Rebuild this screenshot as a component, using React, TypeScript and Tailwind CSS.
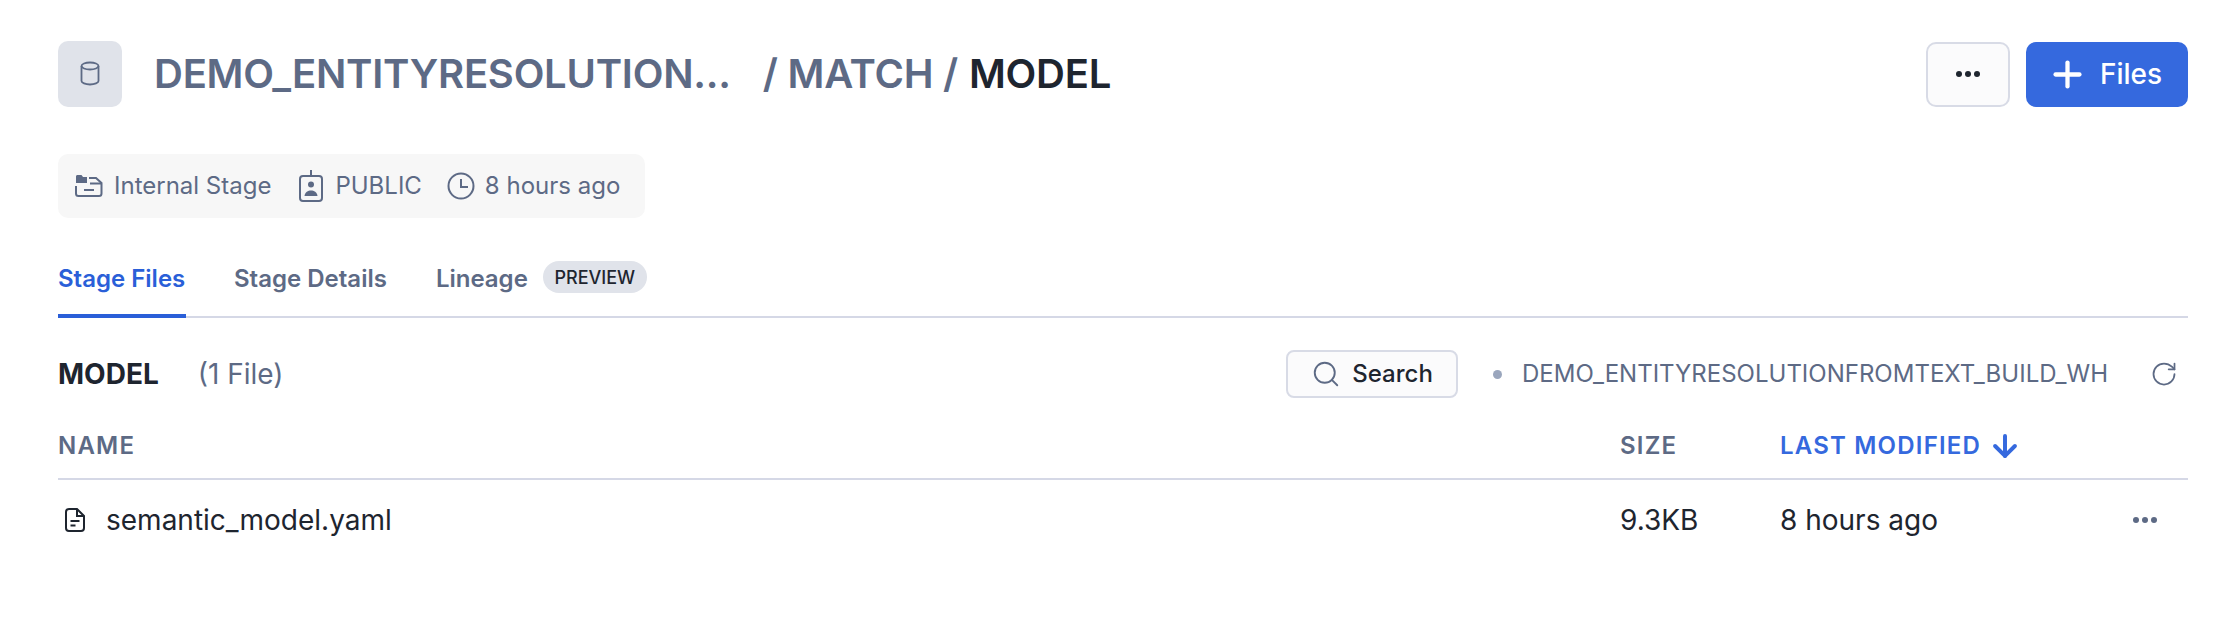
import React from 'react';
import { Plus, Search, ArrowDown, RotateCw } from 'lucide-react';

const DatabaseIcon = () => (
  <svg width="24" height="26" viewBox="0 0 24 26" fill="none" stroke="#5d6a85" strokeWidth="1.8">
    <ellipse cx="12" cy="5" rx="8.500" ry="3.500" />
    <path d="M3.500 5v15c0 1.800 3.800 3.500 8.500 3.500s8.500-1.700 8.500-3.500V5" />
  </svg>
);

const StageIcon = () => (
  <svg width="28" height="24" viewBox="0 0 28 24" fill="none" stroke="#5d6a85" strokeWidth="2">
    <path d="M1 2.500C1 1.500 1.700 1 2.500 1h4l1.500 2h4v6H1z" fill="#5d6a85" stroke="none" />
    <path d="M14 4h7l5.500 5v10.500a2.500 2.500 0 0 1-2.500 2.500H3.500A2.500 2.500 0 0 1 1 19.500V12" />
    <path d="M15 9.500h11M9 16h10" />
  </svg>
);

const RoleIcon = () => (
  <svg width="26" height="32" viewBox="0 0 26 32" fill="none" stroke="#5d6a85" strokeWidth="2">
    <path d="M13 0v6" />
    <rect x="2" y="6" width="22" height="25" rx="3" />
    <circle cx="13" cy="14.500" r="3" fill="#5d6a85" stroke="none" />
    <path d="M6.500 26c.5-4 3.500-5.500 6.500-5.500s6 1.500 6.500 5.500z" fill="#5d6a85" stroke="none" />
  </svg>
);

const ClockIcon = () => (
  <svg width="28" height="28" viewBox="0 0 28 28" fill="none" stroke="#5d6a85" strokeWidth="2">
    <circle cx="14" cy="14" r="12.500" />
    <path d="M14 7v8h7" />
  </svg>
);

const FileIcon = () => (
  <svg width="20" height="24" viewBox="0 0 20 24" fill="none" stroke="#1e252f" strokeWidth="2">
    <path d="M4 1h8l7 7v12a3 3 0 0 1-3 3H4a3 3 0 0 1-3-3V4a3 3 0 0 1 3-3z" />
    <path d="M12 1v7h7M5.500 13h9M5.500 17.500h5" />
  </svg>
);

const Dots = ({ color }: { color: string }) => (
  <svg width="26" height="8" viewBox="0 0 26 8" fill={color}>
    <circle cx="4" cy="4" r="3" />
    <circle cx="13" cy="4" r="3" />
    <circle cx="22" cy="4" r="3" />
  </svg>
);

export default function App() {
  return (
    <div className="min-h-[632px] bg-white pt-[41px] pl-[58px] pr-[46px] font-['Inter',sans-serif] text-[#1e252f]">
      {/* Title row */}
      <div className="flex items-center h-[66px]">
        <div className="w-[64px] h-[66px] rounded-[10px] bg-[#e0e3ea] flex items-center justify-center">
          <DatabaseIcon />
        </div>
        <h1 className="ml-[32px] flex-1 flex items-center text-[40px] font-semibold tracking-[-0.25px] text-[#5d6a85] whitespace-nowrap">
          <span>DEMO_ENTITYRESOLUTION...</span>
          <span className="ml-[32px]">/ MATCH /</span>
          <span className="ml-[11px] text-[#1e252f]">MODEL</span>
        </h1>
        <button className="w-[84px] h-[65px] rounded-[10px] border-2 border-[#d8dbe6] bg-[#fbfbfc] flex items-center justify-center">
          <Dots color="#1e252f" />
        </button>
        <button className="ml-[16px] w-[162px] h-[65px] rounded-[10px] bg-[#3569de] text-white text-[28px] font-medium flex items-center pl-[21px] gap-[12px]">
          <Plus size={41} strokeWidth={2.5} />
          Files
        </button>
      </div>

      {/* Meta chip */}
      <div className="mt-[47px] w-[587px] h-[64px] rounded-[10px] bg-[#f7f7f7] flex items-center pl-[17px] text-[24px] text-[#5d6a85] whitespace-nowrap">
        <StageIcon />
        <span className="ml-[11px]">Internal Stage</span>
        <span className="ml-[27px]"><RoleIcon /></span>
        <span className="ml-[11px]">PUBLIC</span>
        <span className="ml-[25px]"><ClockIcon /></span>
        <span className="ml-[10px]">8 hours ago</span>
      </div>

      {/* Tabs */}
      <div className="mt-[30px] h-[70px] flex items-start border-b-2 border-[#d5d8e6] text-[24px] font-semibold text-[#5d6a85] whitespace-nowrap">
        <div className="h-[70px] pt-[13px] w-[128px] border-b-4 border-[#2a5fd8] text-[#2a5fd8]">Stage Files</div>
        <div className="ml-[48px] pt-[13px]">Stage Details</div>
        <div className="ml-[49px] pt-[13px]">Lineage</div>
        <span className="ml-[15px] mt-[13px] h-[32px] w-[104px] justify-center rounded-full bg-[#e0e3ea] text-[#1e252f] text-[18px] font-medium flex items-center">PREVIEW</span>
      </div>

      {/* Folder heading */}
      <div className="mt-[32px] h-[48px] flex items-center whitespace-nowrap">
        <span className="text-[28px] font-bold">MODEL</span>
        <span className="ml-[39px] text-[28px] text-[#5d6a85]">(1 File)</span>
        <button className="ml-auto w-[172px] h-[48px] rounded-[8px] border-2 border-[#d8dbe6] bg-[#fbfbfc] flex items-center justify-center gap-[11px] text-[24px] font-medium">
          <Search size={30} strokeWidth={1.5} className="text-[#5d6a85]" />
          Search
        </button>
        <span className="ml-[35px] w-[9px] h-[9px] rounded-full bg-[#9aa6bd]" />
        <span className="ml-[20px] text-[24px] text-[#5d6a85]">DEMO_ENTITYRESOLUTIONFROMTEXT_BUILD_WH</span>
        <RotateCw size={28} strokeWidth={1.5} className="ml-[42px] mr-[10px] text-[#5d6a85]" />
      </div>

      {/* File table */}
      <div className="mt-[29px] h-[53px] grid grid-cols-[1562px_160px_1fr] items-center border-b-2 border-[#d5d8e6] text-[24px] font-semibold tracking-[1.2px] text-[#5d6a85] pb-[14px]">
        <span>NAME</span>
        <span>SIZE</span>
        <span className="flex items-center gap-[7px] text-[#3569de]">
          LAST MODIFIED
          <ArrowDown size={34} strokeWidth={2.8} />
        </span>
      </div>
      <div className="h-[80px] grid grid-cols-[1562px_160px_1fr] items-center text-[28px]">
        <span className="flex items-center pl-[7px] gap-[21px]">
          <FileIcon />
          semantic_model.yaml
        </span>
        <span>9.3KB</span>
        <span className="flex items-center justify-between pr-[30px]">
          8 hours ago
          <Dots color="#5d6a85" />
        </span>
      </div>
    </div>
  );
}
